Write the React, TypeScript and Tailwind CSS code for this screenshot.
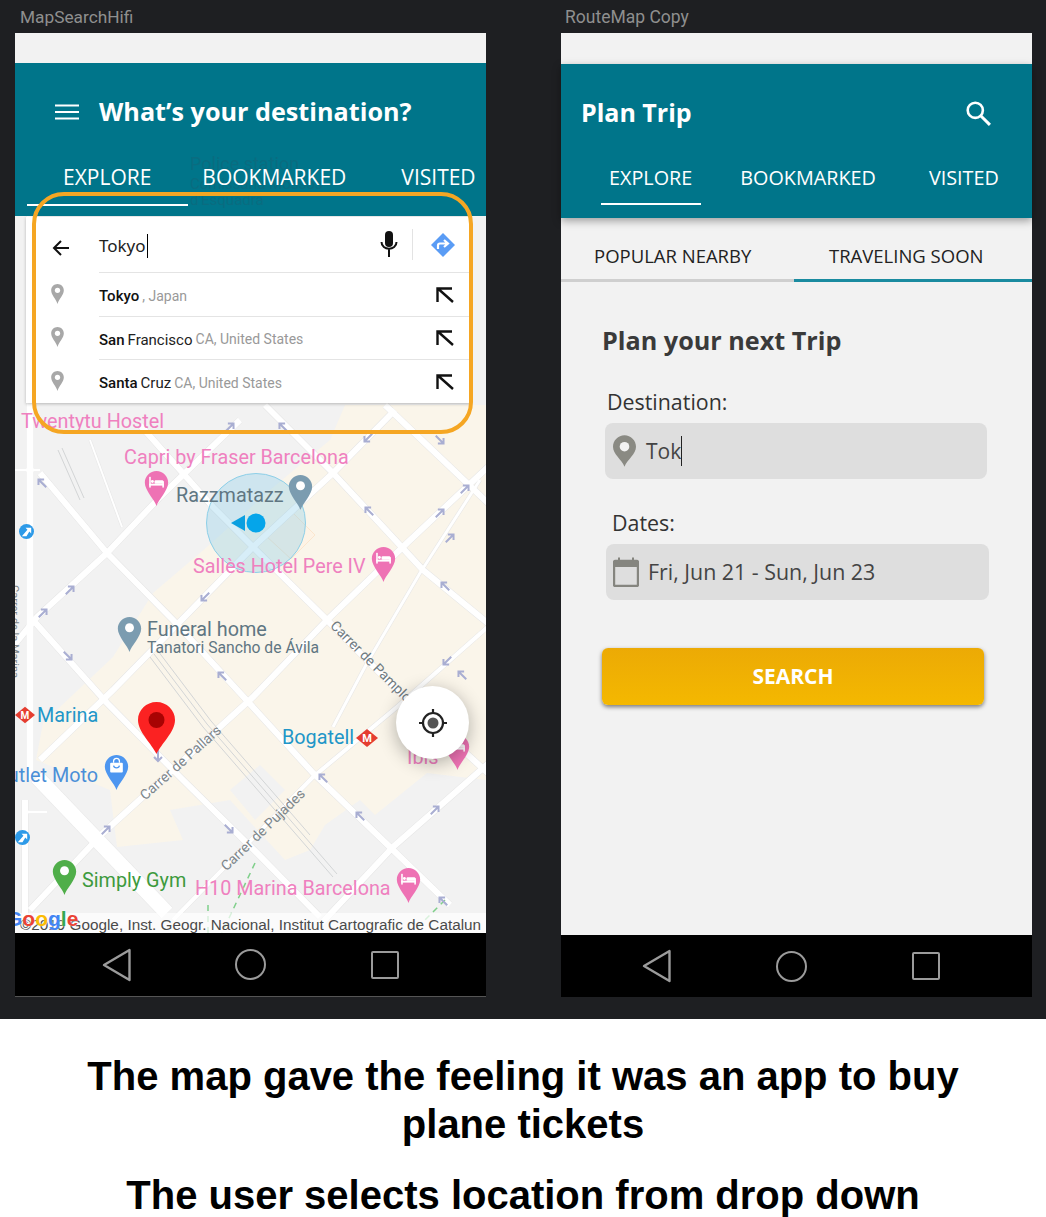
const poiPin = "M12 0C5.4 0 0 5.4 0 12c0 8 10.5 18 12 24 1.5-6 12-16 12-24C24 5.4 18.6 0 12 0z";

function Poi({ className, color, kind }: { className: string; color: string; kind: "bed" | "dot" | "bag" }) {
  return (
    <svg viewBox="0 0 24 38" className={className}>
      <path d={poiPin} fill={color} />
      {kind === "dot" && <circle cx="12" cy="11" r="4.6" fill="#fff" />}
      {kind === "bed" && (
        <g fill="#fff">
          <rect x="4.5" y="6" width="1.6" height="11" />
          <rect x="4.5" y="13" width="15" height="2" />
          <rect x="18" y="10.5" width="1.6" height="6.5" />
          <rect x="10" y="9.5" width="9" height="3.5" rx="1" />
          <circle cx="7.8" cy="10.8" r="1.5" />
        </g>
      )}
      {kind === "bag" && (
        <g>
          <rect x="5.5" y="8" width="13" height="10" rx="1" fill="#fff" />
          <path d="M9 8V6.5a3 3 0 0 1 6 0V8" fill="none" stroke="#fff" strokeWidth="1.3" />
          <path d="M9 11c.5 3 5.500 3 6 0" fill="none" stroke={color} strokeWidth="1.3" />
        </g>
      )}
    </svg>
  );
}

function Metro({ className }: { className: string }) {
  return (
    <svg viewBox="0 0 22 18" className={className}>
      <path d="M11 0l11 9-11 9L0 9z" fill="#e53d30" />
      <text x="11" y="13" textAnchor="middle" fontSize="11" fontWeight="700" fill="#fff" fontFamily="Roboto, sans-serif">M</text>
    </svg>
  );
}

function Transit({ className }: { className: string }) {
  return (
    <svg viewBox="0 0 16 16" className={className}>
      <circle cx="8" cy="8" r="8" fill="#2d9ae8" />
      <path d="M3 13l6-7-2-2h6v6l-2-2-3 5z" fill="#fff" />
    </svg>
  );
}

function Nav({ right }: { right?: boolean }) {
  return (
    <div className={right ? "h-[62px] bg-black flex items-center text-[#9b9b9b]" : "h-[64px] bg-black flex items-center text-[#9b9b9b] border-b border-[#555]"}>
      <svg viewBox="0 0 32 36" className={right ? "ml-[80px] w-[32px] h-[36px]" : "ml-[86px] w-[32px] h-[36px]"}>
        <path d="M28.500 3v30L3 18z" fill="none" stroke="currentColor" strokeWidth="2.400" strokeLinejoin="round" />
      </svg>
      <div className={right ? "ml-[103px] w-[31px] h-[31px] rounded-full border-[2.500px] border-[#9b9b9b]" : "ml-[102px] w-[31px] h-[31px] rounded-full border-[2.500px] border-[#9b9b9b]"} />
      <div className="ml-[105px] w-[28px] h-[28px] rounded-[2px] border-[2.500px] border-[#9b9b9b]" />
    </div>
  );
}

const streets: [string, number][] = [
  ["M30 216V780", 7],
  ["M25 800V930", 6],
  ["M25 812H47", 3],
  ["M10 470H40", 3],
  ["M10 650L37 617L107 553L160 497L240 420", 6],
  ["M40 760L113 690L253 547L333 473L395 410", 6],
  ["M30 910L103 833L253 697L327 620L407 543L490 465", 6],
  ["M320 925L393 847L490 762", 6],
  ["M173 920L313 777L397 707L490 625", 4],
  ["M40 473L107 553L173 620L240 693L313 773L393 850L450 905", 6],
  ["M140 425L213 507L253 547L327 620L400 693L490 775", 6],
  ["M265 405L293 433L333 473L423 570L490 625", 6],
  ["M385 405L490 505", 6],
  ["M33 620L107 703L180 777L257 853L320 917", 6],
  ["M37 777L167 913", 15],
  ["M333 727L367 663L420 573L480 480", 3],
  ["M90 440L122 527", 2],
];

const oneWay: [number, number, number][] = [
  [42, 483, 315], [70, 590, 45], [43, 613, 45], [68, 656, 135], [205, 597, 225], [222, 676, 315],
  [369, 511, 315], [440, 513, 45], [465, 489, 45], [450, 538, 45], [445, 586, 315], [447, 661, 225],
  [462, 675, 315], [158, 756, 180], [106, 830, 45], [229, 829, 135], [323, 778, 315], [360, 816, 315],
  [435, 810, 45], [443, 901, 315], [230, 427, 45], [283, 427, 315], [368, 438, 225], [440, 440, 135],
];

function MapPanel() {
  return (
    <div className="relative flex-1 overflow-hidden bg-[#f2f2f2] font-['Roboto',sans-serif]">
      <svg viewBox="15 216 471 717" className="absolute inset-0 w-[471px] h-[717px]">
        <path
          d="M345 405L330 440L270 490L207 547L153 593L113 657L43 723L36 760L110 790L117 847L183 840L170 810L230 800L262 835L285 860L310 850L325 825L360 800L375 815L427 773L486 780V405z"
          fill="#faf5ea"
        />
        <path d="M290 510l25 25-24 24-26-24z" fill="#fdf3e6" stroke="#fbe6ce" />
        <path d="M230 790l30-25 25 25-30 30z" fill="#f2f2f2" />
        {streets.map(([d, w]) => (
          <path key={`c-${d}`} d={d} fill="none" stroke="#e6e6e6" strokeWidth={w + 1} />
        ))}
        {streets.map(([d, w]) => (
          <path key={d} d={d} fill="none" stroke="#fff" strokeWidth={w} />
        ))}
        <g fill="none" stroke="#d3d5d6" strokeWidth="1">
          <path d="M150 657L203 727L333 877M154 654L207 724L337 874M158 651L211 721L310 835" />
          <path d="M58 450L80 500M62 448L84 498" />
        </g>
        <path d="M255 863L222 933M208 905V933M445 900L415 930" fill="none" stroke="#7fcf8a" strokeWidth="1.500" strokeDasharray="6 5" />
        {oneWay.map(([x, y, r]) => (
          <g key={`${x}-${y}`} transform={`translate(${x} ${y}) rotate(${r})`} fill="none" stroke="#a9aed2" strokeWidth="2">
            <path d="M0 6V-5M-4 -1L0 -5L4 -1" />
          </g>
        ))}
        <circle cx="256" cy="523" r="49.500" fill="#7cc8e8" fillOpacity="0.3" stroke="#8dcfe8" />
        <path d="M231 523l14-8v16z" fill="#0a9fe0" />
        <circle cx="256" cy="523" r="9.500" fill="#05a5ea" />
      </svg>

      <span className="absolute left-[6px] top-[195px] text-[19.800px] leading-[22px] text-[#ef80bf]">Twentytu Hostel</span>
      <span className="absolute left-[109px] top-[231px] text-[19.800px] leading-[22px] text-[#ef80bf] whitespace-nowrap">Capri by Fraser Barcelona</span>
      <span className="absolute left-[161px] top-[269px] text-[19.800px] leading-[22px] text-[#5f7682]">Razzmatazz</span>
      <span className="absolute left-[178px] top-[340px] text-[19.800px] leading-[22px] text-[#ef80bf] whitespace-nowrap">Sallès Hotel Pere IV</span>
      <span className="absolute left-[132px] top-[403px] text-[19.800px] leading-[22px] text-[#5f7682] whitespace-nowrap">Funeral home</span>
      <span className="absolute left-[132px] top-[423px] text-[15.700px] leading-[18px] text-[#5f7682] whitespace-nowrap">Tanatori Sancho de Ávila</span>
      <span className="absolute left-[22px] top-[489px] text-[19.800px] leading-[22px] text-[#2196c8]">Marina</span>
      <span className="absolute left-[267px] top-[511px] text-[19.800px] leading-[22px] text-[#2196c8]">Bogatell</span>
      <span className="absolute right-[388px] top-[549px] text-[19.800px] leading-[22px] text-[#4a8fd8] whitespace-nowrap">Outlet Moto</span>
      <span className="absolute left-[67px] top-[654px] text-[19.800px] leading-[22px] text-[#3d9a3d] whitespace-nowrap">Simply Gym</span>
      <span className="absolute left-[180px] top-[662px] text-[19.800px] leading-[22px] text-[#ef80bf] whitespace-nowrap">H10 Marina Barcelona</span>
      <span className="absolute left-[392px] top-[531px] text-[19.800px] leading-[22px] text-[#ef80bf]">Ibis</span>

      <span className="absolute left-[318px] top-[400px] origin-left rotate-[45deg] text-[14px] leading-[14px] text-[#6f7a80] whitespace-nowrap">Carrer de Pamplona</span>
      <span className="absolute left-[127px] top-[574px] origin-left rotate-[-42deg] text-[14px] leading-[14px] text-[#7d868b] whitespace-nowrap">Carrer de Pallars</span>
      <span className="absolute left-[208px] top-[645px] origin-left rotate-[-44deg] text-[14px] leading-[14px] text-[#7d868b] whitespace-nowrap">Carrer de Pujades</span>
      <span className="absolute left-[-47px] top-[410px] rotate-90 text-[11px] leading-[11px] text-[#7d868b] whitespace-nowrap">Carrer de la Marina</span>

      <Poi className="absolute left-[128px] top-[255px] w-[27px] h-[37px]" color="#ee72b4" kind="bed" />
      <Poi className="absolute left-[272px] top-[259px] w-[27px] h-[37px]" color="#7b9cb0" kind="dot" />
      <Poi className="absolute left-[355px] top-[331px] w-[27px] h-[37px]" color="#ee72b4" kind="bed" />
      <Poi className="absolute left-[101px] top-[401px] w-[27px] h-[37px]" color="#7b9cb0" kind="dot" />
      <Poi className="absolute left-[88px] top-[539px] w-[27px] h-[37px]" color="#4d96f0" kind="bag" />
      <Poi className="absolute left-[429px] top-[519px] w-[27px] h-[37px]" color="#ee72b4" kind="bed" />
      <Poi className="absolute left-[380px] top-[652px] w-[27px] h-[37px]" color="#ee72b4" kind="bed" />
      <Poi className="absolute left-[36px] top-[644px] w-[27px] h-[37px]" color="#4fae49" kind="dot" />

      <Metro className="absolute left-[0px] top-[490px] w-[20px] h-[18px]" />
      <Metro className="absolute left-[341px] top-[513px] w-[22px] h-[18px]" />
      <Transit className="absolute left-[4px] top-[308px] w-[15px] h-[15px]" />
      <Transit className="absolute left-[0px] top-[614px] w-[15px] h-[15px]" />

      <svg viewBox="0 0 37 52" className="absolute left-[123px] top-[486px] w-[37px] h-[52px]">
        <path d="M18.500 0C8.300 0 0 8 0 18c0 12 14 24 18.500 34C23 42 37 30 37 18 37 8 28.700 0 18.500 0z" fill="#fb2222" />
        <circle cx="18.500" cy="18" r="8" fill="#a80303" />
      </svg>

      <div className="absolute bottom-0 left-0 right-0 h-[20px] bg-white/70 pl-[5px] text-[15.300px] leading-[23px] text-[#4a4a4a] whitespace-nowrap font-['Liberation_Sans',sans-serif]">
        ©2019 Google, Inst. Geogr. Nacional, Institut Cartografic de Catalun
      </div>
      <div className="absolute left-[-9px] bottom-[1px] text-[21px] leading-[26px] font-['Liberation_Sans',sans-serif] font-bold [text-shadow:0_0_2px_#fff]">
        <span className="text-[#4285f4]">G</span>
        <span className="text-[#ea4335]">o</span>
        <span className="text-[#fbbc05]">o</span>
        <span className="text-[#4285f4]">g</span>
        <span className="text-[#34a853]">l</span>
        <span className="text-[#ea4335]">e</span>
      </div>

      <div className="absolute left-[381px] top-[470px] w-[73px] h-[73px] rounded-full bg-white shadow-[0_4px_18px_rgba(0,0,0,0.3)] flex items-center justify-center">
        <svg viewBox="0 0 30 30" className="w-[30px] h-[30px]">
          <circle cx="15" cy="15" r="10" fill="none" stroke="#222" strokeWidth="2.200" />
          <circle cx="15" cy="15" r="5.500" fill="#555" />
          <path d="M15 1v4M15 25v4M1 15h4M25 15h4" stroke="#222" strokeWidth="2.200" />
        </svg>
      </div>

      <SearchCard />
    </div>
  );
}

const suggestions = [
  { bold: "Tokyo", rest: "", sub: ", Japan" },
  { bold: "San", rest: "Francisco", sub: "CA, United States" },
  { bold: "Santa", rest: "Cruz", sub: "CA, United States" },
];

function SearchCard() {
  return (
    <div className="absolute left-[11px] top-[1px] w-[444px] h-[186px] bg-white shadow-[0_1px_3px_rgba(0,0,0,0.25)]">
      <div className="h-[55px] flex items-center">
        <svg viewBox="0 0 20 20" className="ml-[25px] w-[20px] h-[20px] mt-[7px]">
          <path d="M18 10H3M10 3l-7 7 7 7" fill="none" stroke="#111" strokeWidth="2" />
        </svg>
        <span className="ml-[28px] h-[24px] text-[17px] leading-[24px] text-[#222] font-['Noto_Sans',sans-serif] mt-[2px] border-r border-black pr-[1px]">Tokyo</span>
        <svg viewBox="0 0 18 26" className="ml-auto w-[18px] h-[26px] mt-[-2px]">
          <rect x="5" y="0" width="8" height="16" rx="4" fill="#111" />
          <path d="M1.500 11c0 9 15 9 15 0M9 18v8" fill="none" stroke="#111" strokeWidth="2" />
        </svg>
        <div className="ml-[14px] w-px h-[31px] bg-[#e3e3e3]" />
        <svg viewBox="0 0 24 24" className="ml-[18px] mr-[15px] w-[24px] h-[24px] mt-[1px]">
          <path d="M12 0l12 12-12 12L0 12z" fill="#5a9cf5" />
          <path d="M7 16v-3.500a2 2 0 0 1 2-2h7M13 7l4 3.500-4 3.500" fill="none" stroke="#fff" strokeWidth="2.200" />
        </svg>
      </div>
      {suggestions.map((s) => (
        <div key={s.bold} className="h-[43.500px] flex items-center relative">
          <svg viewBox="0 0 24 38" className="ml-[24px] w-[15px] h-[20px]">
            <path d="M12 0C5.400 0 0 5.400 0 12c0 9 9 16 12 26 3-10 12-17 12-26C24 5.400 18.600 0 12 0z" fill="#a8a8a8" />
            <circle cx="12" cy="12" r="5" fill="#fff" />
          </svg>
          <div className="absolute left-[73px] right-0 top-0 h-full pt-[5px] flex items-center text-[15px] font-['Roboto',sans-serif] whitespace-nowrap">
            <span className="font-medium text-[#111]">{s.bold}</span>
            {s.rest && <span className="ml-[3px] text-[#222]">{s.rest}</span>}
            <span className="ml-[3px] text-[14px] text-[#999]">{s.sub}</span>
          </div>
          <svg viewBox="0 0 18 16" className="ml-auto mr-[16px] w-[18px] h-[16px] mt-[2px]">
            <path d="M17 15L3 2.500M1.500 15V1.500H16" fill="none" stroke="#111" strokeWidth="2.400" />
          </svg>
          <div className="absolute left-[73px] right-0 top-0 h-px bg-[#e4e4e4]" />
        </div>
      ))}
    </div>
  );
}

function LeftPhone() {
  return (
    <div className="relative w-[471px] h-[964px] flex flex-col bg-[#f2f2f2]">
      <div className="h-[30px]" />
      <div className="relative h-[153px] bg-[#00758a] text-white font-['Open_Sans',sans-serif]">
        <div className="absolute left-[175px] top-[92px] text-[#0a6c80] font-['Roboto',sans-serif] text-[18px] leading-[18px] whitespace-nowrap">Police station</div>
        <div className="absolute left-[175px] top-[114px] text-[#0a6c80] font-['Roboto',sans-serif] text-[15px] leading-[15px] whitespace-nowrap">Comissaria Mossos</div>
        <div className="absolute left-[175px] top-[130px] text-[#0a6c80] font-['Roboto',sans-serif] text-[15px] leading-[15px] whitespace-nowrap">d'Esquadra</div>
        <div className="relative h-[99px] flex items-center pb-[2px]">
          <svg viewBox="0 0 24 16" className="ml-[40px] w-[24px] h-[16px]">
            <path d="M0 1.500h24M0 8h24M0 14.500h24" stroke="#fff" strokeWidth="2" />
          </svg>
          <span className="ml-[20px] text-[25.200px] font-bold leading-none whitespace-nowrap">What’s your destination?</span>
        </div>
        <div className="relative flex text-[21px] leading-[30px] whitespace-nowrap">
          <div className="ml-[48px]">EXPLORE</div>
          <div className="ml-[51px]">BOOKMARKED</div>
          <div className="ml-[55px]">VISITED</div>
        </div>
        <div className="relative ml-[12px] mt-[12px] w-[161px] h-[2px] bg-white" />
      </div>
      <MapPanel />
      <Nav />
      {/* orange highlight drawn over the screenshot */}
      <div className="absolute left-[17px] top-[159px] w-[441px] h-[242px] rounded-[32px] border-[4px] border-[#f5a623]" />
    </div>
  );
}

function RightPhone() {
  return (
    <div className="relative w-[471px] h-[964px] flex flex-col bg-[#f2f2f2] font-['Open_Sans',sans-serif]">
      <div className="h-[31px]" />
      <div className="h-[154px] bg-[#00758a] text-white shadow-[0_3px_8px_rgba(0,0,0,0.35)] z-10">
        <div className="h-[99px] flex items-center pl-[20px] pr-[41px] pb-[2px]">
          <span className="text-[25px] font-bold leading-none">Plan Trip</span>
          <svg viewBox="0 0 24 24" className="ml-auto w-[26px] h-[26px]">
            <circle cx="9.500" cy="9.500" r="7" fill="none" stroke="#fff" strokeWidth="2.400" />
            <path d="M14.500 14.500L23 23" stroke="#fff" strokeWidth="2.800" />
          </svg>
        </div>
        <div className="flex text-[19.800px] leading-[30px] whitespace-nowrap">
          <div className="ml-[48px]">EXPLORE</div>
          <div className="ml-[48px]">BOOKMARKED</div>
          <div className="ml-[53px]">VISITED</div>
        </div>
        <div className="ml-[40px] mt-[10px] w-[100px] h-[2px] bg-white" />
      </div>
      <div className="flex-1 flex flex-col text-[#333]">
        <div className="h-[64px] flex">
          <div className="w-[233px] h-full flex flex-col">
            <div className="flex-1 pl-[33px] pt-[25px] text-[18.500px] leading-[26px] text-[#222] whitespace-nowrap">POPULAR NEARBY</div>
            <div className="h-[3px] bg-[#cfcfcf]" />
          </div>
          <div className="flex-1 h-full flex flex-col">
            <div className="flex-1 pl-[35px] pt-[25px] text-[18.500px] leading-[26px] text-[#222] whitespace-nowrap">TRAVELING SOON</div>
            <div className="h-[3px] bg-[#1a8ba0]" />
          </div>
        </div>
        <div className="mt-[41px] ml-[41px] text-[25.200px] font-bold leading-[34px] text-[#3a3a3a]">Plan your next Trip</div>
        <div className="mt-[31px] ml-[46px] text-[21.400px] leading-[28px] text-[#333]">Destination:</div>
        <div className="mt-[7px] ml-[44px] w-[382px] h-[56px] rounded-[8px] bg-[#dedede] flex items-center">
          <svg viewBox="0 0 24 33" className="ml-[8px] w-[23px] h-[32px]">
            <path d="M12 0C5.400 0 0 5.400 0 12c0 8 9 13 12 21 3-8 12-13 12-21C24 5.400 18.600 0 12 0z" fill="#8a8a83" />
            <circle cx="12" cy="12" r="5" fill="#f2f2f2" />
          </svg>
          <span className="ml-[10px] text-[21px] leading-[30px] text-[#444] border-r border-[#222]">Tok</span>
        </div>
        <div className="mt-[30px] ml-[51px] text-[21.400px] leading-[28px] text-[#333]">Dates:</div>
        <div className="mt-[7px] ml-[45px] w-[383px] h-[56px] rounded-[8px] bg-[#dedede] flex items-center">
          <svg viewBox="0 0 26 30" className="ml-[7px] w-[26px] h-[30px]">
            <rect x="1" y="4" width="24" height="25" rx="1.500" fill="none" stroke="#85857f" strokeWidth="2.400" />
            <rect x="1" y="4" width="24" height="6" fill="#85857f" />
            <path d="M6 0.500v4M20 0.500v4" stroke="#85857f" strokeWidth="2" />
          </svg>
          <span className="ml-[9px] text-[21.400px] leading-[30px] text-[#444] whitespace-nowrap">Fri, Jun 21 - Sun, Jun 23</span>
        </div>
        <div className="mt-[48px] ml-[41px] w-[382px] h-[57px] pt-[1px] rounded-[6px] bg-gradient-to-b from-[#ecaa05] to-[#f4b800] shadow-[0_2px_4px_rgba(0,0,0,0.5)] flex items-center justify-center text-white text-[21px] font-bold">
          SEARCH
        </div>
      </div>
      <Nav right />
    </div>
  );
}

export default function App() {
  return (
    <div className="w-[1046px] h-[1217px] bg-white overflow-hidden">
      <div className="h-[1019px] bg-[#1e1f22] flex pl-[15px] gap-[75px]">
        <div>
          <div className="h-[33px] pl-[5px] text-[#8f8f8f] text-[17.300px] leading-[34px] font-['Roboto',sans-serif]">MapSearchHifi</div>
          <LeftPhone />
        </div>
        <div>
          <div className="h-[33px] pl-[4px] text-[#8f8f8f] text-[17.500px] leading-[34px] font-['Roboto',sans-serif]">RouteMap Copy</div>
          <RightPhone />
        </div>
      </div>
      <div className="text-center text-black font-bold font-['Liberation_Sans',sans-serif] text-[40px] leading-[48px] pt-[33px]">
        <div className="w-[900px] mx-auto">The map gave the feeling it was an app to buy plane tickets</div>
        <div className="mt-[23px]">The user selects location from drop down</div>
      </div>
    </div>
  );
}
